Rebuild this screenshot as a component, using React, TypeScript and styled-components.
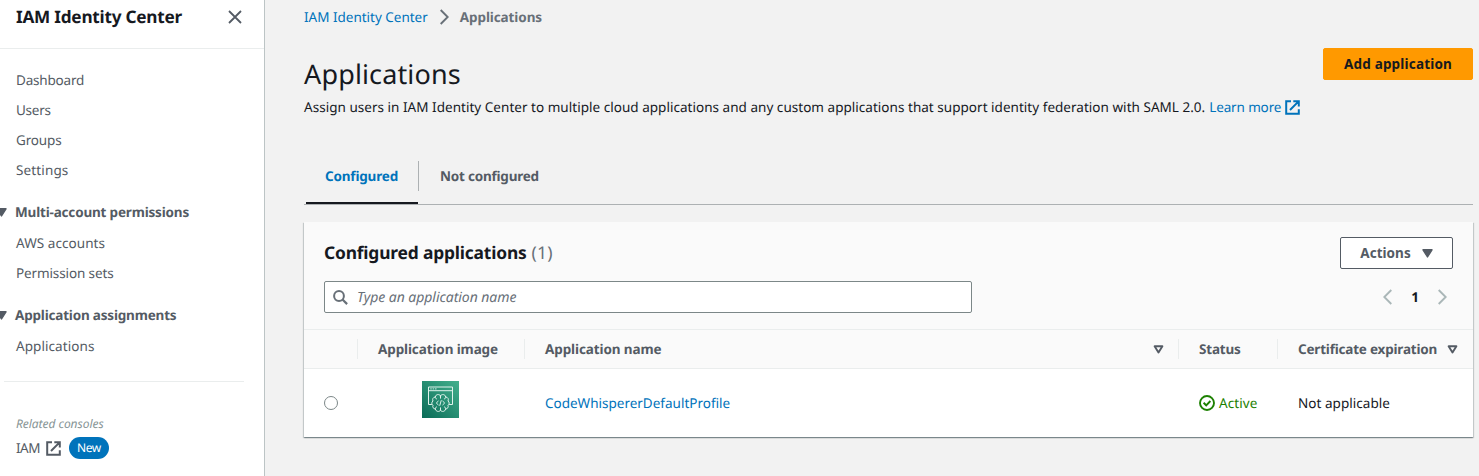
import React from "react";
import styled, { createGlobalStyle, css } from "styled-components";

const color = {
  ink: "#16191f",
  slate: "#545b64",
  muted: "#687078",
  link: "#0073bb",
  line: "#eaeded",
  orange: "#ff9900",
  green: "#1d8102",
};

const GlobalStyle = createGlobalStyle`
  * { box-sizing: border-box; }
  body {
    margin: 0;
    background: #f2f2f2;
    color: ${color.ink};
    font-family: "Noto Sans", "Open Sans", sans-serif;
    font-size: 13.5px;
    line-height: 20px;
    text-rendering: geometricPrecision;
    overflow: hidden;
  }
`;

/* Inline text run with its own tracking, in hundredths of a pixel. */
const T = styled.span<{ $t?: number }>`
  letter-spacing: ${(p) => (p.$t ?? 0) / 100}px;
  white-space: nowrap;
`;

const Shell = styled.div`
  display: flex;
  width: 1479px;
  height: 476px;
  overflow: hidden;
`;

/* ---------- side navigation ---------- */

const Sidebar = styled.aside`
  flex: none;
  width: 265px;
  background: #fff;
  border-right: 1px solid #bcc4c5;
  color: ${color.slate};
`;

const SideHeader = styled.header`
  display: flex;
  align-items: center;
  justify-content: space-between;
  height: 49px;
  padding: 0 22px 14px 16px;
  border-bottom: 1px solid ${color.line};
`;

const SideTitle = styled.h2`
  margin: 0;
  padding-top: 2px;
  color: ${color.ink};
  font-size: 17.2px;
  font-weight: 700;
`;

const NavList = styled.ul<{ $first?: boolean }>`
  list-style: none;
  margin: 0;
  padding: ${(p) => (p.$first ? "16px" : "0")} 16px 0;
`;

const NavItem = styled.li`
  height: 30px;
  line-height: 30px;
`;

const NavSection = styled.div<{ $gap: number }>`
  display: flex;
  align-items: center;
  gap: 8px;
  height: 32px;
  margin: ${(p) => p.$gap}px 0 0 -4px;
  font-weight: 700;
`;

const Divider = styled.hr`
  width: 240px;
  height: 1px;
  margin: 20px 0 0 4px;
  border: 0;
  background: ${color.line};
`;

const Related = styled.div`
  padding: 32px 0 0 16px;
`;

const RelatedLabel = styled.div`
  height: 20px;
  color: #879596;
  font-size: 12px;
  font-style: italic;
`;

const RelatedRow = styled.div`
  display: flex;
  align-items: center;
  height: 22px;
  margin-top: 3px;

  svg { margin: 0 8px 0 6px; }
`;

const Badge = styled.span`
  width: 40px;
  height: 22px;
  border-radius: 11px;
  background: ${color.link};
  color: #fff;
  font-size: 12px;
  line-height: 22px;
  text-align: center;
`;

/* ---------- main column ---------- */

const Main = styled.main`
  flex: 1;
  min-width: 0;
  padding: 7px 6px 0 39px;
`;

const Breadcrumb = styled.nav`
  display: flex;
  align-items: center;
  height: 20px;
  color: ${color.muted};
  font-weight: 700;

  svg { margin: 0 11px 0 12px; }
`;

const Link = styled.a`
  color: ${color.link};
  font-weight: 400;
`;

const PageHeader = styled.div`
  display: flex;
  justify-content: space-between;
  align-items: flex-start;
  height: 98px;
  padding-top: 21px;
`;

const PageTitle = styled.h1`
  margin: 8px 0 0;
  font-size: 27px;
  font-weight: 400;
  line-height: 36px;
`;

const Description = styled.p`
  display: flex;
  align-items: center;
  margin: 5px 0 0;
  line-height: 20px;

  a { margin-left: 4px; }
  svg { margin-left: 4px; }
`;

const Button = styled.button<{ $primary?: boolean }>`
  display: flex;
  align-items: center;
  justify-content: center;
  gap: 11px;
  width: ${(p) => (p.$primary ? 150 : 113)}px;
  height: 32px;
  padding: 0;
  border: 1px solid ${(p) => (p.$primary ? color.orange : color.slate)};
  border-radius: 2px;
  background: ${(p) => (p.$primary ? color.orange : "#fff")};
  color: ${(p) => (p.$primary ? color.ink : color.slate)};
  font: inherit;
  font-weight: 700;
`;

const Tabs = styled.div`
  display: flex;
  height: 57px;
  margin-top: 23px;
  padding-left: 2px;
  border-bottom: 1px solid #adb1b3;
`;

const Tab = styled.div<{ $active?: boolean }>`
  display: flex;
  align-items: flex-start;
  height: 56px;
  padding-top: 13px;
  font-weight: 700;
  line-height: 30px;
  ${(p) =>
    p.$active
      ? css`
          width: 112px;
          padding-left: 19px;
          border-bottom: 2px solid ${color.ink};
          color: ${color.link};
        `
      : css`
          padding-left: 21px;
          color: ${color.slate};
        `}
`;

const TabRule = styled.i`
  width: 1px;
  height: 30px;
  margin-top: 13px;
  background: #adb1b3;
`;

const Panel = styled.section`
  height: 215px;
  margin-top: 17px;
  background: #fff;
  box-shadow: 0 1px 1px 0 rgba(0, 28, 36, 0.3), 1px 1px 1px 0 rgba(0, 28, 36, 0.15),
    -1px 1px 1px 0 rgba(0, 28, 36, 0.15);
`;

const PanelHead = styled.div`
  height: 107px;
  padding: 15px 20px 0;
  background: #fafafa;
`;

const PanelRow = styled.div`
  display: flex;
  justify-content: space-between;
  align-items: center;
  height: 32px;

  & + & { margin-top: 12px; }
`;

const PanelTitle = styled.h3`
  display: flex;
  gap: 5px;
  margin: 0;
  font-size: 17.4px;
  font-weight: 700;
`;

const Count = styled.span`
  color: ${color.muted};
  font-size: 17.6px;
  font-weight: 400;
`;

const Search = styled.div`
  display: flex;
  align-items: center;
  gap: 9px;
  width: 648px;
  height: 32px;
  padding-left: 8px;
  border: 1px solid #7c8788;
  border-radius: 2px;
  background: #fff;
  color: ${color.muted};
  font-size: 14px;
  font-style: italic;

  span { padding-top: 1px; }
`;

const Pager = styled.div`
  display: flex;
  align-items: center;
  gap: 19px;
  padding-right: 6px;
  font-weight: 700;
`;

/* ---------- table ---------- */

const columns = "53px 167px 654px 99px 196px";

const HeadRow = styled.div`
  display: grid;
  grid-template-columns: ${columns};
  align-items: center;
  height: 40px;
  border-top: 1px solid ${color.line};
  border-bottom: 1px solid ${color.line};
  background: #fafafa;
  color: ${color.slate};
  font-weight: 700;
`;

const HeadCell = styled.div<{ $end?: number }>`
  display: flex;
  align-items: center;
  justify-content: space-between;
  height: 20px;
  padding: 0 ${(p) => p.$end ?? 0}px 0 20px;

  & + & { border-left: 1px solid ${color.line}; }
`;

const BodyRow = styled.div`
  display: grid;
  grid-template-columns: ${columns};
  align-items: center;
  height: 68px;
`;

const Cell = styled.div<{ $center?: boolean }>`
  display: flex;
  align-items: center;
  justify-content: ${(p) => (p.$center ? "center" : "flex-start")};
  padding: 0 0 0 ${(p) => (p.$center ? 0 : 21)}px;
`;

const Radio = styled.span`
  width: 14px;
  height: 14px;
  margin-left: -1px;
  border: 1px solid #7c8788;
  border-radius: 50%;
  background: #fff;
`;

const AppLogo = styled.svg`
  margin-bottom: 7px;
`;

const Status = styled.span`
  display: flex;
  align-items: center;
  gap: 4px;
  color: ${color.green};
`;

/* ---------- icons ---------- */

const Caret = () => (
  <svg width="11" height="9" viewBox="0 0 11 9">
    <path d="M1 .8h9L5.5 8z" fill={color.slate} stroke={color.slate} strokeWidth="1.4" strokeLinejoin="round" />
  </svg>
);

const SortCaret = () => (
  <svg width="11" height="9" viewBox="0 0 11 9">
    <path d="M1.6 1.2h7.8L5.5 7.5z" fill="none" stroke={color.slate} strokeWidth="1.9" strokeLinejoin="round" />
  </svg>
);

const Close = () => (
  <svg width="14" height="14" viewBox="0 0 14 14">
    <path d="M1 1l12 12M13 1L1 13" stroke={color.slate} strokeWidth="1.8" />
  </svg>
);

const Chevron = ({ left, stroke = "#aab7b8" }: { left?: boolean; stroke?: string }) => (
  <svg width="9" height="16" viewBox="0 0 9 16">
    <path d={left ? "M8.3 1L1.3 8l7 7" : "M.7 1l7 7-7 7"} fill="none" stroke={stroke} strokeWidth="1.9" />
  </svg>
);

const External = ({ stroke }: { stroke: string }) => (
  <svg width="15" height="15" viewBox="0 0 15 15">
    <path d="M6 1.2H1.2v12.6h12.6V9.3M8.3 1.2h5.5v5.2M13.6 1.4L5 10" fill="none" stroke={stroke} strokeWidth="2" />
  </svg>
);

const Magnifier = () => (
  <svg width="15" height="15" viewBox="0 0 15 15">
    <circle cx="6" cy="6" r="4.9" fill="none" stroke={color.muted} strokeWidth="2" />
    <path d="M9.5 9.5l4.6 4.6" stroke={color.muted} strokeWidth="2.2" />
  </svg>
);

const CheckCircle = () => (
  <svg width="16" height="16" viewBox="0 0 16 16">
    <circle cx="8" cy="8" r="7" fill="none" stroke={color.green} strokeWidth="1.9" />
    <path d="M4.6 7.8l2.6 2.5 4.2-4.3" fill="none" stroke={color.green} strokeWidth="1.9" />
  </svg>
);

const CodeWhispererLogo = () => (
  <AppLogo width="37" height="37" viewBox="0 0 37 37">
    <defs>
      <linearGradient id="tile" x1="0" y1="1" x2="1" y2="0">
        <stop offset="0" stopColor="#0a6b57" />
        <stop offset="1" stopColor="#43b08d" />
      </linearGradient>
    </defs>
    <rect width="37" height="37" fill="url(#tile)" />
    <g fill="none" stroke="#e0f3ec" strokeWidth="1" strokeLinejoin="round" strokeLinecap="round">
      <path d="M9.5 23.5h-3V6h24v17.5h-3M6.5 9.7h24" />
      <path d="M8.6 7.9h.8M11 7.9h.8M13.4 7.9h.8" strokeWidth=".9" />
      <path d="M18.5 14.8c-1-2-4.8-1.8-5.2 1.2-2.4.2-3.2 2.4-2.3 4-1.6 1.2-1.6 3.2 0 4.2-.8 2 .4 3.6 2.4 3.8.4 2.8 4 3.2 5.1 1.2 1.1 2 4.7 1.6 5.1-1.2 2-.2 3.2-1.8 2.4-3.8 1.6-1 1.6-3 0-4.2.9-1.6.1-3.8-2.3-4-.4-3-4.2-3.2-5.2-1.2z" />
      <path d="M18.5 14.8v2.4M18.5 26.8v2.4M13.3 16c0 1 .5 1.7 1.3 2M23.7 16c0 1-.5 1.7-1.3 2M13.4 28c0-1.2.4-1.8 1.2-2.2M23.6 28c0-1.2-.4-1.8-1.2-2.2" />
      <path d="M16.2 20.2L14.3 22l1.9 1.8M20.8 20.2l1.9 1.8-1.9 1.8M19.2 19.6l-1.4 4.8" />
    </g>
  </AppLogo>
);

export default function App() {
  return (
    <Shell>
      <GlobalStyle />
      <Sidebar>
        <SideHeader>
          <SideTitle><T $t={-24}>IAM Identity Center</T></SideTitle>
          <Close />
        </SideHeader>
        <NavList $first>
          <NavItem><T $t={-20}>Dashboard</T></NavItem>
          <NavItem><T $t={-25}>Users</T></NavItem>
          <NavItem><T $t={-15}>Groups</T></NavItem>
          <NavItem><T $t={13}>Settings</T></NavItem>
        </NavList>
        <NavSection $gap={11}><Caret /><T $t={-18}>Multi-account permissions</T></NavSection>
        <NavList>
          <NavItem><T $t={6}>AWS accounts</T></NavItem>
          <NavItem><T $t={-12}>Permission sets</T></NavItem>
        </NavList>
        <NavSection $gap={11}><Caret /><T $t={-19}>Application assignments</T></NavSection>
        <NavList>
          <NavItem><T $t={7}>Applications</T></NavItem>
        </NavList>
        <Divider />
        <Related>
          <RelatedLabel><T $t={-4}>Related consoles</T></RelatedLabel>
          <RelatedRow>
            <T $t={-50}>IAM</T>
            <External stroke={color.slate} />
            <Badge><T $t={-40}>New</T></Badge>
          </RelatedRow>
        </Related>
      </Sidebar>

      <Main>
        <Breadcrumb>
          <Link><T $t={-1}>IAM Identity Center</T></Link>
          <Chevron stroke={color.muted} />
          <T $t={-10}>Applications</T>
        </Breadcrumb>
        <PageHeader>
          <div>
            <PageTitle><T $t={14}>Applications</T></PageTitle>
            <Description>
              <T $t={3}>
                Assign users in IAM Identity Center to multiple cloud applications and any custom applications that support identity federation with SAML 2.0.
              </T>
              <Link><T $t={-14}>Learn more</T></Link>
              <External stroke={color.link} />
            </Description>
          </div>
          <Button $primary><T $t={18}>Add application</T></Button>
        </PageHeader>

        <Tabs>
          <Tab $active><T $t={-18}>Configured</T></Tab>
          <TabRule />
          <Tab><T $t={-21}>Not configured</T></Tab>
        </Tabs>

        <Panel>
          <PanelHead>
            <PanelRow>
              <PanelTitle>
                <T $t={-18}>Configured applications</T>
                <Count><T $t={15}>(1)</T></Count>
              </PanelTitle>
              <Button><T $t={4}>Actions</T><Caret /></Button>
            </PanelRow>
            <PanelRow>
              <Search><Magnifier /><T $t={-5}>Type an application name</T></Search>
              <Pager><Chevron left /><span>1</span><Chevron /></Pager>
            </PanelRow>
          </PanelHead>
          <HeadRow>
            <HeadCell />
            <HeadCell><T $t={-12}>Application image</T></HeadCell>
            <HeadCell $end={14}><T $t={-11}>Application name</T><SortCaret /></HeadCell>
            <HeadCell><T $t={-20}>Status</T></HeadCell>
            <HeadCell $end={15}><T $t={-20}>Certificate expiration</T><SortCaret /></HeadCell>
          </HeadRow>
          <BodyRow>
            <Cell><Radio /></Cell>
            <Cell $center><CodeWhispererLogo /></Cell>
            <Cell><Link><T>CodeWhispererDefaultProfile</T></Link></Cell>
            <Cell><Status><CheckCircle /><T $t={10}>Active</T></Status></Cell>
            <Cell><T $t={4}>Not applicable</T></Cell>
          </BodyRow>
        </Panel>
      </Main>
    </Shell>
  );
}
